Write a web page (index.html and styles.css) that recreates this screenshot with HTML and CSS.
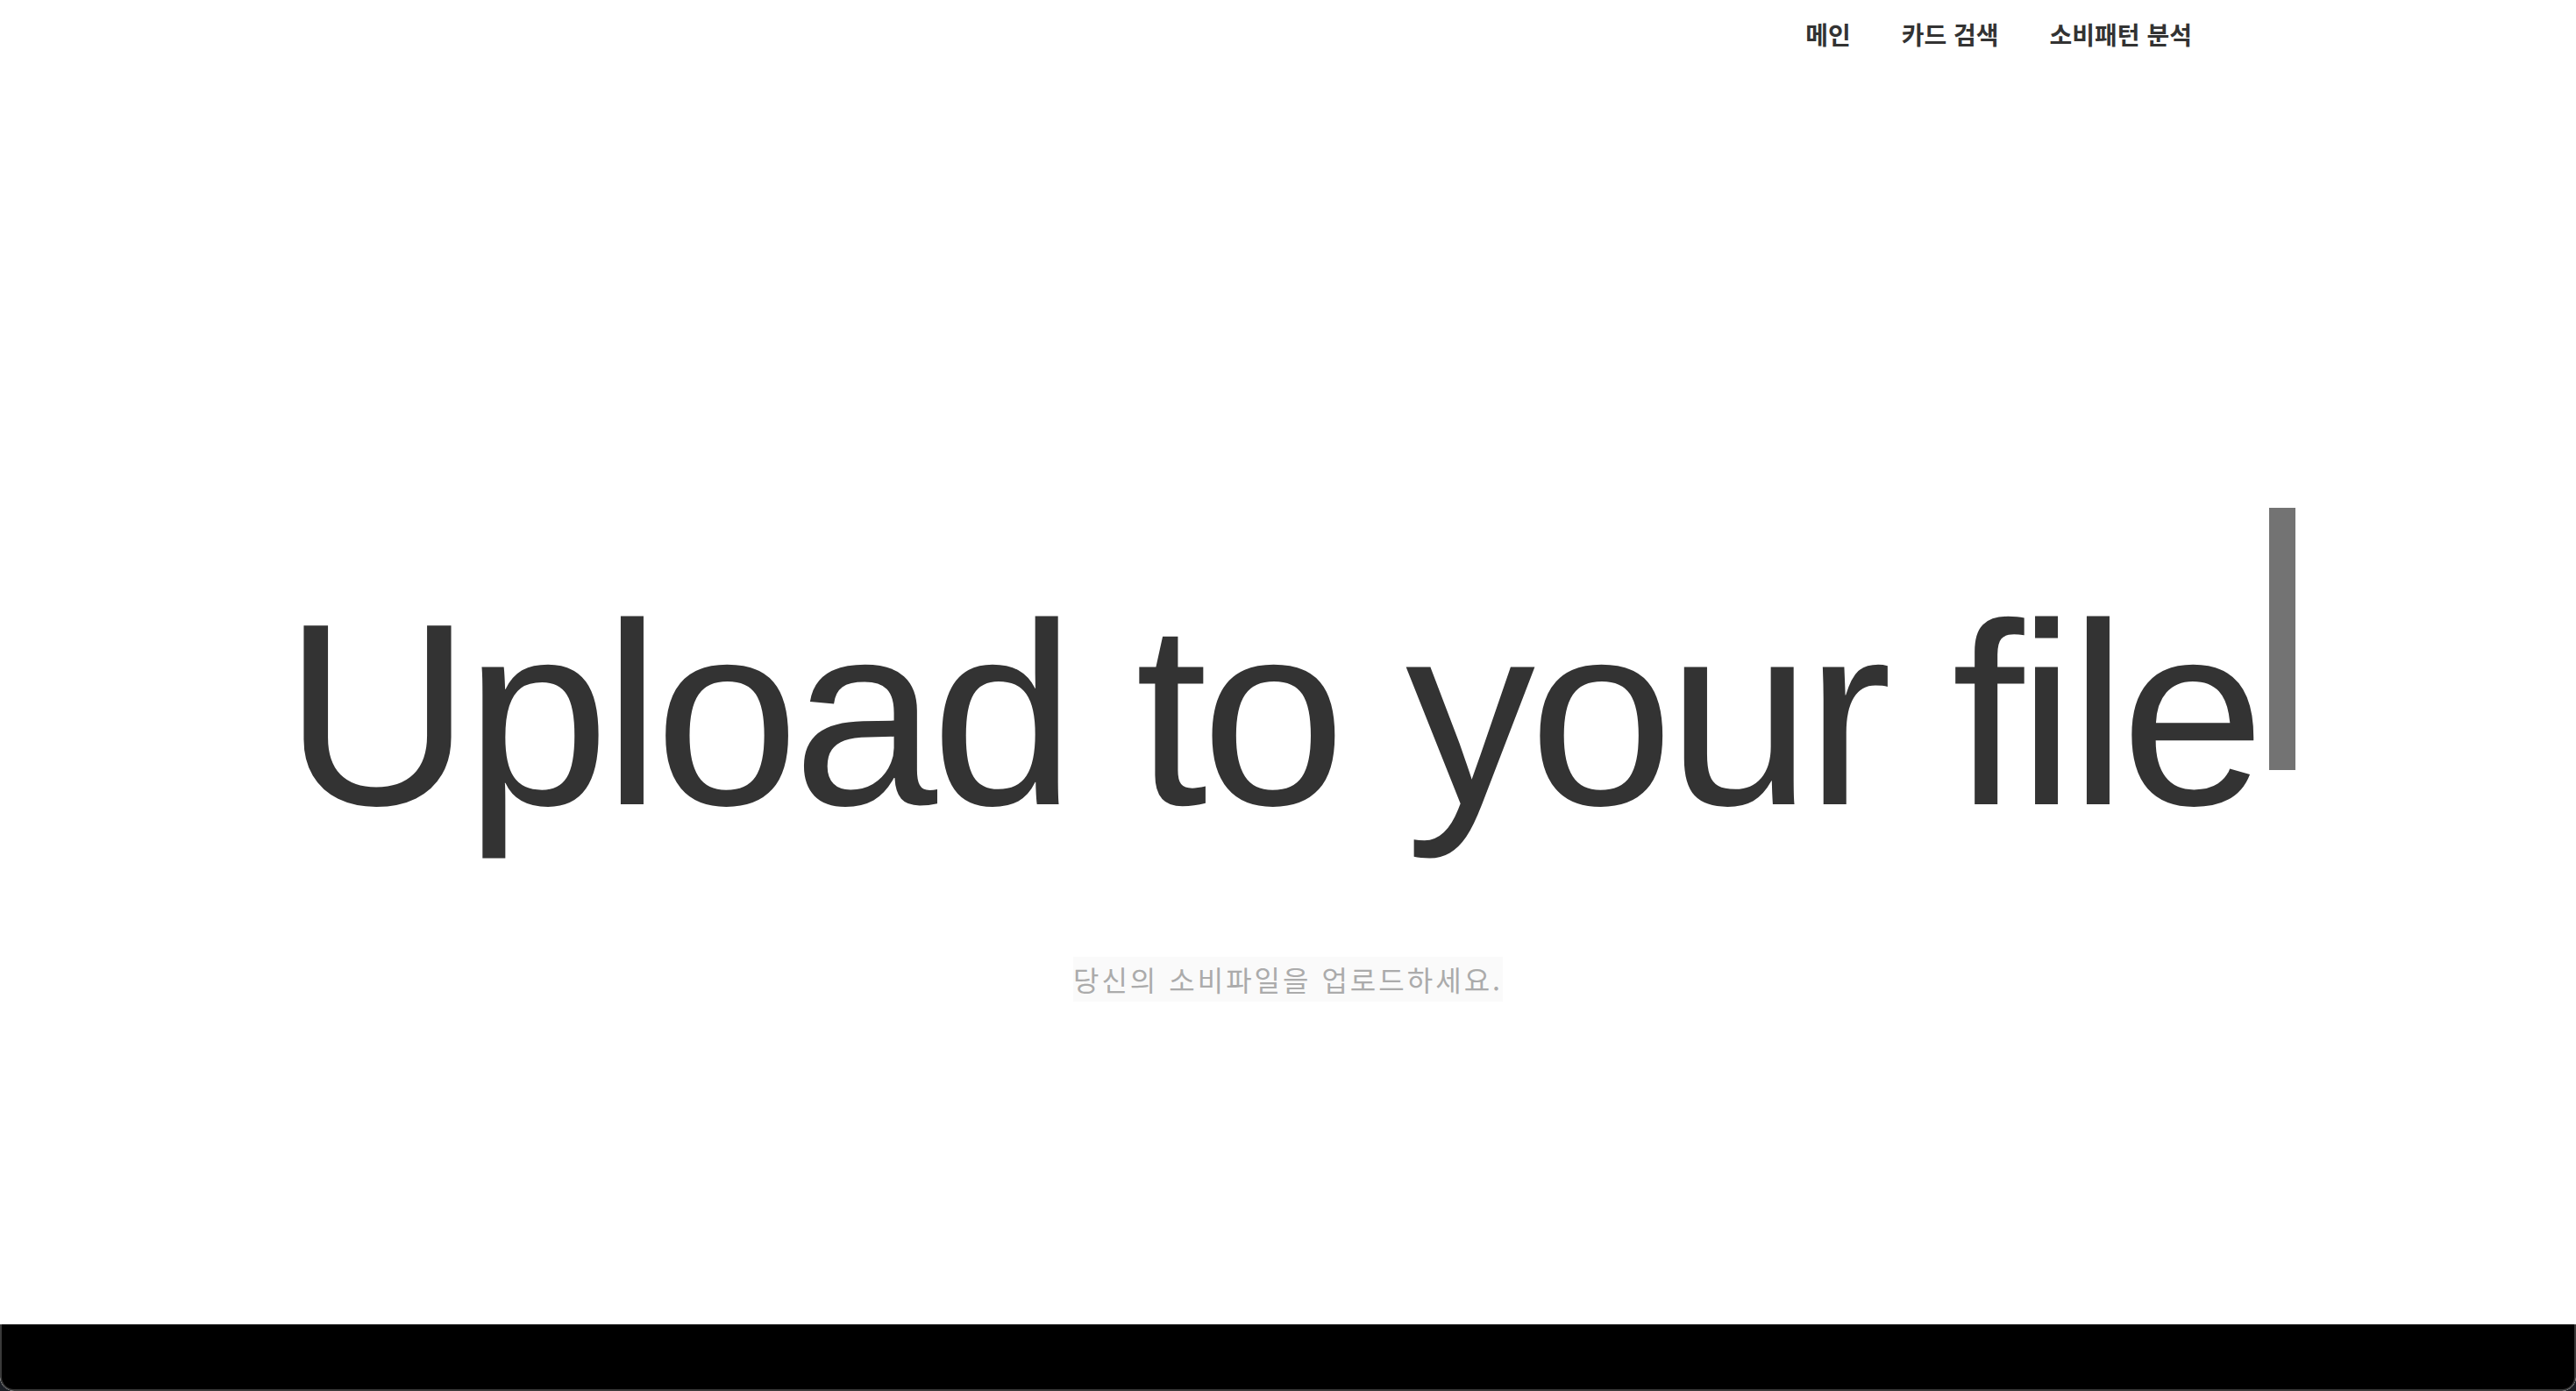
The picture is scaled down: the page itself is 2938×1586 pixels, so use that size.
FILE: index.html
```html
<!DOCTYPE html>
<html lang="ko">
<head>
<meta charset="utf-8">
<title>Upload</title>
<link rel="stylesheet" href="styles.css">
</head>
<body>
<div class="page">
  <header class="topbar">
    <nav class="nav">
      <a class="nav-link" href="#">메인</a>
      <a class="nav-link" href="#">카드 검색</a>
      <a class="nav-link" href="#">소비패턴 분석</a>
    </nav>
  </header>
  <main class="hero">
    <h1 class="headline">Upload to your file<span class="cursor"></span></h1>
    <p class="subtitle"><span class="subtitle-text">당신의 소비파일을 업로드하세요.</span></p>
  </main>
  <footer class="footer"></footer>
</div>
</body>
</html>
```

FILE: styles.css
```css
html, body {
  margin: 0;
  padding: 0;
  height: 100%;
}
body {
  background: #1b1f26;
  font-family: "Liberation Sans", Arial, "Noto Sans CJK KR", sans-serif;
  overflow: hidden;
}
.page {
  height: 1586px;
  display: flex;
  flex-direction: column;
  background: #ffffff;
  border-radius: 0 0 16px 16px;
  overflow: hidden;
}
.topbar {
  height: 78px;
  display: flex;
  align-items: center;
  justify-content: flex-end;
  padding-right: 438px;
}
.nav {
  display: flex;
  gap: 58px;
}
.nav-link {
  font-family: "Noto Sans CJK KR", sans-serif;
  font-weight: 700;
  font-size: 28px;
  color: #333333;
  text-decoration: none;
  line-height: 40px;
}
.hero {
  display: flex;
  flex-direction: column;
  align-items: center;
  padding-top: 501px;
}
.headline {
  margin: 0;
  font-family: "Liberation Sans", Arial, sans-serif;
  font-weight: 400;
  font-size: 296px;
  line-height: 296px;
  letter-spacing: -7px;
  color: #333333;
  white-space: nowrap;
  padding-right: 0;
  padding-left: 4px;
}
.cursor {
  display: inline-block;
  width: 30px;
  height: 299px;
  margin-left: 12px;
  background: #737373;
  vertical-align: 39px;
}
.subtitle {
  margin: 128px 0 0;
}
.subtitle-text {
  display: inline-block;
  font-family: "Noto Sans CJK KR", sans-serif;
  font-size: 32px;
  letter-spacing: 3px;
  line-height: 51px;
  color: #ababab;
  background: #fafafa;
}
.footer {
  margin-top: auto;
  height: 74px;
  background: #000000;
  border: 2px solid #3a3a3a;
  border-top: none;
  border-radius: 0 0 16px 16px;
}
```
